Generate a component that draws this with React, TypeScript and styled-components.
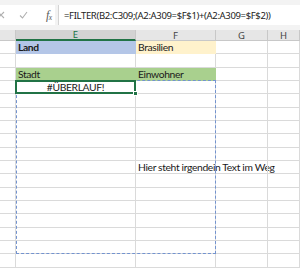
import React, { FC } from 'react';
import styled, { createGlobalStyle, css } from 'styled-components';

const ROW_H = 40 / 3;
const ROW_COUNT = 17;
const GRID = '#dadada';
const EXCEL_GREEN = '#217346';

type Fill = 'blue' | 'gold' | 'green';

interface CellData {
	text?: string;
	fill?: Fill;
	bold?: boolean;
	center?: boolean;
	active?: boolean;
}

const fills: Record<Fill, string> = {
	blue: '#b4c6e7',
	gold: '#fff2cc',
	green: '#a9d08e',
};

const columns = ['', 'E', 'F', 'G', 'H'];

// row number (1-based) -> cells for D..H
const sheet: Record<number, CellData[]> = {
	1: [{}, { text: 'Land', fill: 'blue', bold: true }, { text: 'Brasilien', fill: 'gold' }],
	3: [{}, { text: 'Stadt', fill: 'green' }, { text: 'Einwohner', fill: 'green' }],
	4: [{}, { text: '#ÜBERLAUF!', center: true, active: true }],
	10: [{}, {}, { text: 'Hier steht irgendein Text im Weg' }],
};

const formula = '=FILTER(B2:C309;(A2:A309=$F$1)+(A2:A309=$F$2))';

const GlobalStyle = createGlobalStyle`
	html, body {
		margin: 0;
		padding: 0;
		background: #ffffff;
	}
	body {
		width: 300px;
		height: 268px;
		overflow: hidden;
	}
`;

const Window = styled.div`
	width: 300px;
	height: 268px;
	overflow: hidden;
	display: flex;
	flex-direction: column;
	background: #f3f3f3;
`;

const FormulaBar = styled.div`
	height: 30px;
	padding: 5px 0;
	box-sizing: border-box;
	display: flex;
	gap: 3px;
`;

const IconBox = styled.div`
	width: 58px;
	background: #ffffff;
	display: flex;
	align-items: center;
	gap: 14px;
	box-sizing: border-box;
	margin-left: -3px;
`;

const FxLabel = styled.span`
	font-family: 'Liberation Serif', serif;
	font-style: italic;
	font-size: 12px;
	color: #5a5a5a;
	letter-spacing: -0.5px;
	margin-left: 4px;

	sub {
		font-size: 7.5px;
		vertical-align: -1px;
	}
`;

const FormulaInput = styled.div`
	flex: 1;
	background: #ffffff;
	border-left: 1px solid #d4d4d4;
	display: flex;
	align-items: center;
	padding-left: 5px;
	font-family: 'Noto Sans', sans-serif;
	font-size: 9.5px;
	letter-spacing: -0.35px;
	color: #222222;
	white-space: nowrap;
	overflow: hidden;
`;

const Sheet = styled.div`
	flex: 1;
	display: grid;
	grid-template-columns: 16px 120px 80px 52px 1fr;
	grid-template-rows: 11px repeat(${ROW_COUNT}, ${ROW_H}px);
	background: #ffffff;
	position: relative;
`;

const ColHeader = styled.div<{ $selected?: boolean }>`
	background: #e6e6e6;
	border-right: 1px solid #c8c8c8;
	border-bottom: 1px solid #c8c8c8;
	box-sizing: border-box;
	display: flex;
	align-items: center;
	justify-content: center;
	font-family: 'Noto Sans', sans-serif;
	font-size: 9.5px;
	color: #444444;

	${(p) =>
		p.$selected &&
		css`
			background: #d3d3d3;
			color: ${EXCEL_GREEN};
			border-bottom: 2px solid ${EXCEL_GREEN};
		`}
`;

const Cell = styled.div<{ $fill?: Fill; $bold?: boolean; $center?: boolean }>`
	position: relative;
	box-sizing: border-box;
	border-right: 1px solid ${(p) => (p.$fill ? fills[p.$fill] : GRID)};
	border-bottom: 1px solid ${(p) => (p.$fill ? fills[p.$fill] : GRID)};
	background: ${(p) => (p.$fill ? fills[p.$fill] : 'transparent')};
	font-family: 'Lato', 'Liberation Sans', sans-serif;
	font-size: 10.3px;
	letter-spacing: -0.35px;
	font-weight: ${(p) => (p.$bold ? 700 : 400)};
	color: #1a1a1a;
	line-height: 12px;
	padding: 0 2px;
	display: flex;
	align-items: flex-end;
	justify-content: ${(p) => (p.$center ? 'center' : 'flex-start')};
	white-space: nowrap;
	overflow: visible;
`;

const ActiveFrame = styled.div`
	position: absolute;
	inset: -1px -1px -1px -1px;
	border: 2px solid ${EXCEL_GREEN};
	pointer-events: none;
	z-index: 3;

	&::after {
		content: '';
		position: absolute;
		right: -4px;
		bottom: -4px;
		width: 5px;
		height: 5px;
		background: ${EXCEL_GREEN};
		border: 1px solid #ffffff;
		box-sizing: border-box;
	}
`;

/* absolutely positioned grid child: its grid area is the containing block,
   so it stays out of auto-placement */
const SpillRange = styled.div`
	position: absolute;
	inset: -1px 0 0 0;
	grid-column: 2 / 4;
	grid-row: 5 / 18;
	border: 1px dashed #7393cf;
	pointer-events: none;
	z-index: 2;
`;

const CloseIcon = () => (
	<svg width="8" height="8" viewBox="0 0 8 8">
		<path d="M1 1 L7 7 M7 1 L1 7" stroke="#b0b0b0" strokeWidth="1.1" />
	</svg>
);

const CheckIcon = () => (
	<svg width="9" height="8" viewBox="0 0 9 8">
		<path d="M1 4.5 L3.5 7 L8 1" stroke="#b0b0b0" strokeWidth="1.1" fill="none" />
	</svg>
);

const App: FC = () => {
	const rows = Array.from({ length: ROW_COUNT }, (_, i) => i + 1);

	return (
		<>
			<GlobalStyle />
			<Window>
				<FormulaBar>
					<IconBox>
						<CloseIcon />
						<CheckIcon />
						<FxLabel>
							f<sub>x</sub>
						</FxLabel>
					</IconBox>
					<FormulaInput>{formula}</FormulaInput>
				</FormulaBar>

				<Sheet>
					{columns.map((c, i) => (
						<ColHeader key={`h${i}`} $selected={c === 'E'}>
							{c}
						</ColHeader>
					))}

					{rows.map((r) =>
						columns.map((_, ci) => {
							const data = sheet[r]?.[ci] ?? {};
							return (
								<Cell key={`${r}-${ci}`} $fill={data.fill} $bold={data.bold} $center={data.center}>
									{data.text}
									{data.active && <ActiveFrame />}
								</Cell>
							);
						}),
					)}

					<SpillRange />
				</Sheet>
			</Window>
		</>
	);
};

export default App;
